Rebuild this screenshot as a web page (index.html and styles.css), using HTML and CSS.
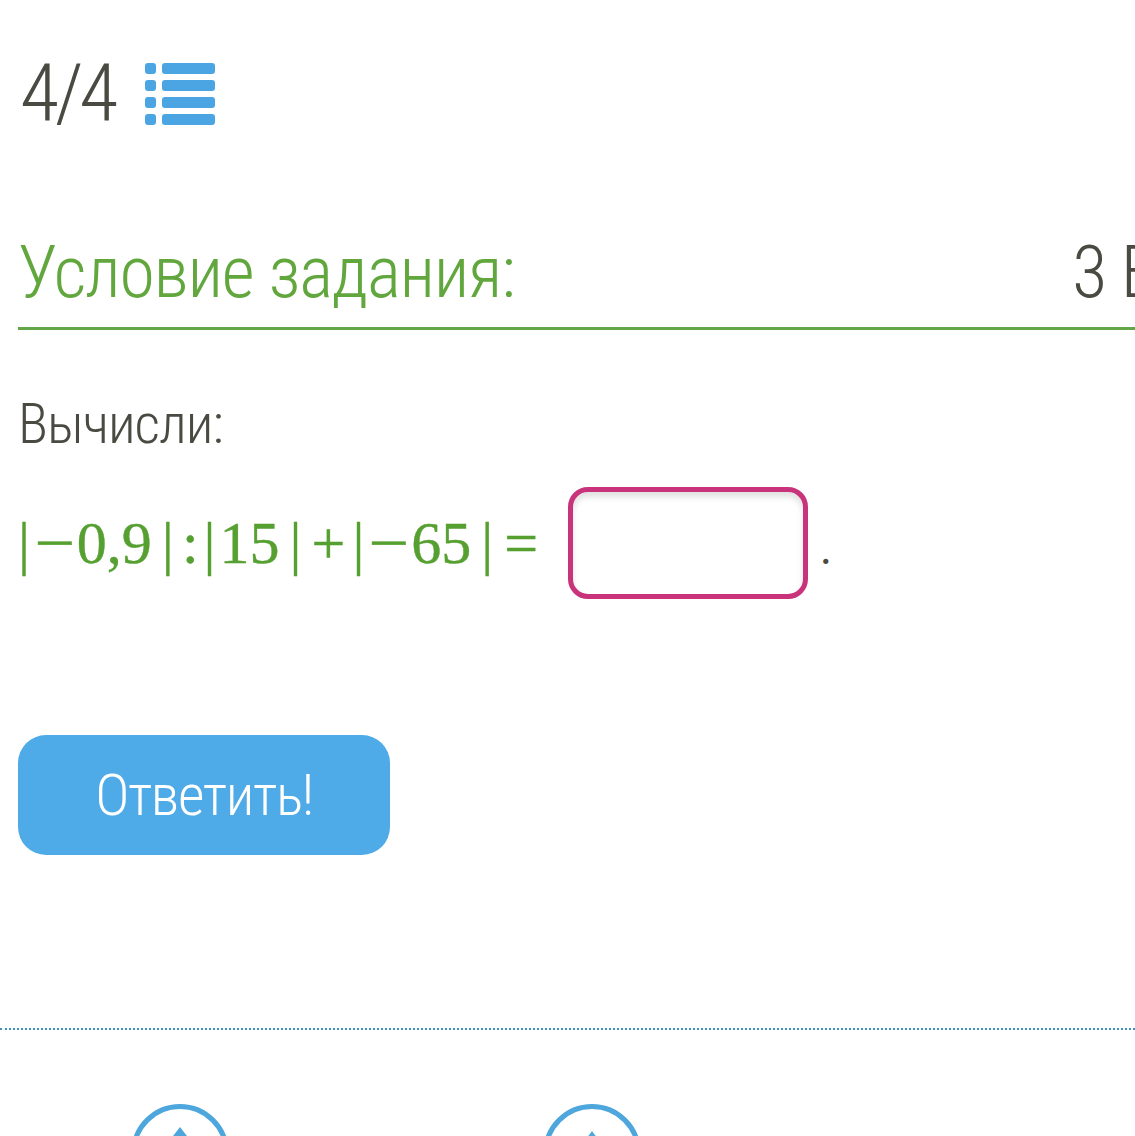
FILE: index.html
```html
<!DOCTYPE html>
<html lang="ru">
<head>
  <meta charset="UTF-8">
  <title>Задание 4/4</title>
  <link rel="stylesheet" href="styles.css">
</head>
<body>

<div class="page">
  <div class="progress">
    <span class="progress-num">4/4</span>
    <svg class="list-icon" width="70" height="63" viewBox="0 0 70 63">
      <rect x="0" y="0" width="11" height="11" rx="3"/>
      <rect x="17" y="0" width="53" height="11" rx="3"/>
      <rect x="0" y="17" width="11" height="11" rx="3"/>
      <rect x="17" y="17" width="53" height="11" rx="3"/>
      <rect x="0" y="34" width="11" height="11" rx="3"/>
      <rect x="17" y="34" width="53" height="11" rx="3"/>
      <rect x="0" y="51" width="11" height="11" rx="3"/>
      <rect x="17" y="51" width="53" height="11" rx="3"/>
    </svg>
  </div>

  <div class="task-head">
    <h2>Условие задания:</h2>
    <span class="points">3 Б.</span>
  </div>

  <p class="task-text">Вычисли:</p>

  <div class="task-row">
    <span class="math"><span class="bar open">|</span><span class="minus">−</span>0,9<span class="bar close">|</span><span class="rel">:</span><span class="bar open">|</span>15<span class="bar close">|</span><span class="op">+</span><span class="bar open">|</span><span class="minus">−</span>65<span class="bar close">|</span><span class="eq">=</span></span>
    <input class="answer" type="text">
    <span class="dot">.</span>
  </div>

  <button class="submit">Ответить!</button>
</div>

<div class="divider"></div>

<div class="nav">
  <div class="nav-btn">
    <svg width="100" height="100" viewBox="0 0 100 100">
      <circle cx="50" cy="50" r="46.5" fill="none" stroke="#4da6dc" stroke-width="5"/>
      <polygon points="50,24 67,46 33,46" fill="#4da6dc"/>
    </svg>
  </div>
  <div class="nav-btn">
    <svg width="100" height="100" viewBox="0 0 100 100">
      <circle cx="50" cy="50" r="46.5" fill="none" stroke="#4da6dc" stroke-width="5"/>
      <polygon points="50,28 61,43 39,43" fill="#4da6dc"/>
    </svg>
  </div>
</div>

</body>
</html>
```

FILE: styles.css
```css
html, body {
  overflow: hidden;
}
body {
  margin: 0;
  background: #fff;
  font-family: 'Roboto Condensed', 'Liberation Sans Narrow', Roboto, sans-serif;
  font-weight: 300;
  color: #4a4a42;
}
.page {
  padding-left: 18px;
}
.progress {
  display: flex;
  align-items: center;
  gap: 31px;
  padding-top: 53px;
}
.progress-num {
  font-size: 80px;
  line-height: 1;
  letter-spacing: -4px;
  margin-left: 2px;
}
.list-icon {
  fill: #4ba5e3;
  margin-top: 2px;
}
.task-head {
  display: flex;
  align-items: baseline;
  gap: 558px;
  width: 1400px;
  margin-top: 104px;
  padding-bottom: 18px;
  border-bottom: 3px solid #62a647;
}
.task-head h2 {
  margin: 0;
  font-size: 72px;
  line-height: 1;
  font-weight: 300;
  letter-spacing: -1.3px;
  color: #62a73e;
  white-space: nowrap;
}
.points {
  font-size: 72px;
  line-height: 1;
  letter-spacing: -1.3px;
  white-space: nowrap;
}
.task-text {
  margin: 66px 0 0;
  font-size: 56px;
  line-height: 1;
  letter-spacing: -1px;
}
.task-row {
  display: flex;
  align-items: center;
  margin-top: 35px;
}
.math {
  font-family: 'Liberation Serif', 'Times New Roman', serif;
  font-weight: 400;
  font-size: 60px;
  line-height: 1;
  color: #56a032;
  white-space: nowrap;
  -webkit-text-stroke: 0.4px #56a032;
}
.math .bar.open {
  margin-right: 4px;
}
.math .bar.close {
  margin-left: 10px;
  margin-right: 3px;
}
.math .minus {
  display: inline-block;
  transform: scaleX(1.2);
  margin: 0 5px 0 4px;
}
.math .rel {
  margin: 0 5px;
}
.math .op {
  margin: 0 7px;
}
.math .eq {
  margin-left: 8px;
}
.answer {
  width: 240px;
  height: 112px;
  box-sizing: border-box;
  margin-left: 30px;
  border: 5px solid #c9337b;
  border-radius: 20px;
  box-shadow: inset 0 5px 6px rgba(0, 0, 0, 0.12);
  outline: none;
}
.dot {
  font-family: 'Liberation Serif', serif;
  font-size: 44px;
  line-height: 1;
  margin-left: 12px;
  margin-top: 14px;
  color: #4a4a42;
}
.submit {
  display: block;
  width: 372px;
  height: 120px;
  margin-top: 136px;
  border: none;
  border-radius: 28px;
  background: #4eabe7;
  color: #fff;
  font-family: inherit;
  font-weight: 300;
  font-size: 58px;
  letter-spacing: -1.4px;
  cursor: pointer;
}
.divider {
  margin-top: 173px;
  border-top: 2px dotted #3f91c2;
}
.nav {
  display: flex;
  gap: 312px;
  padding-left: 130px;
  margin-top: 73px;
}
.nav-btn svg {
  display: block;
}
```
